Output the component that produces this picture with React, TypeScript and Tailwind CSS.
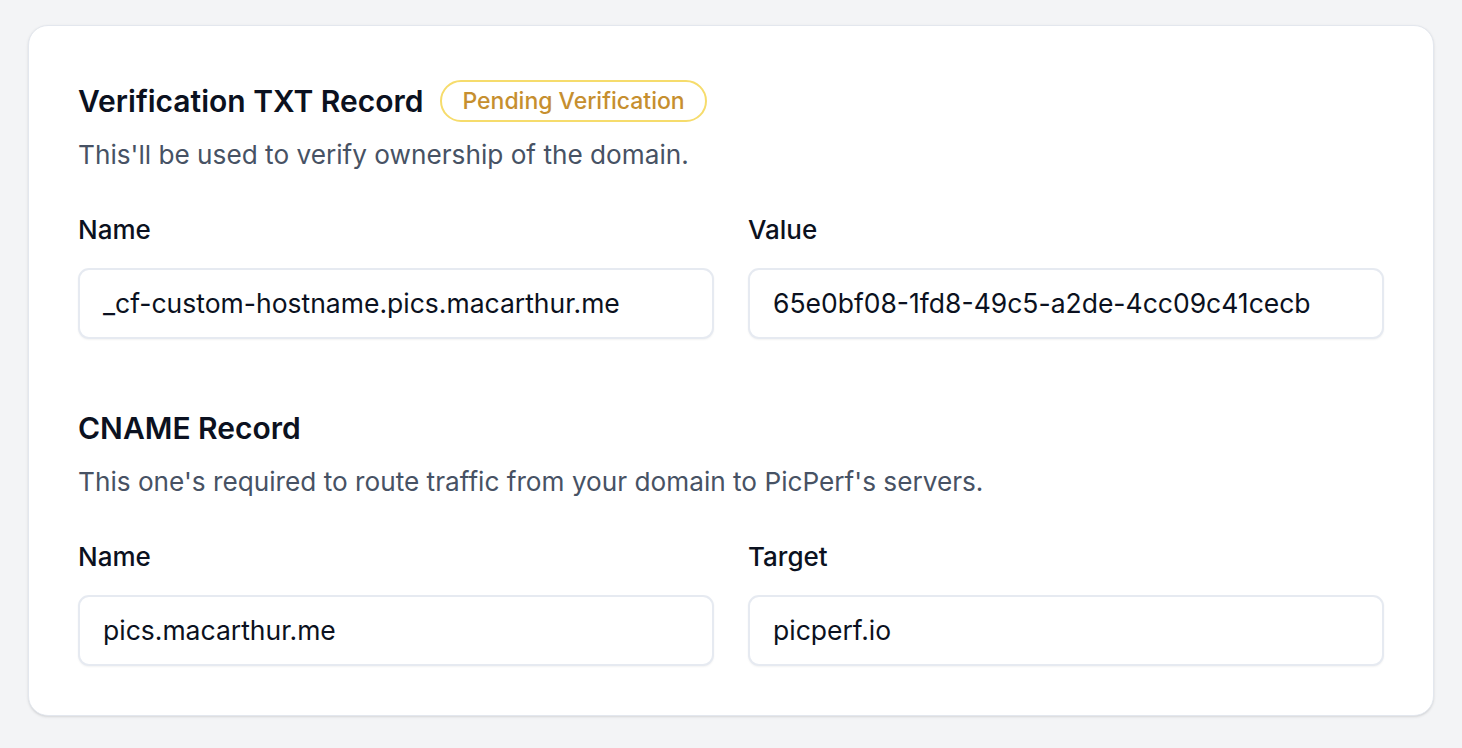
import React from 'react';

type Field = { label: string; value: string };

function RecordSection({
  title,
  copy,
  badge,
  fields,
}: {
  title: string;
  copy: string;
  badge?: string;
  fields: Field[];
}) {
  return (
    <section>
      <div className="flex h-[42px] items-center gap-[17px]">
        <h2 className="text-[30px] font-semibold leading-none text-[#0b1120]">{title}</h2>
        {badge ? (
          <span className="flex h-[42px] items-center rounded-full border-2 border-[#f6dc6c] px-[20px] text-[23px] font-medium text-[#c68f2f]">
            {badge}
          </span>
        ) : null}
      </div>
      <p className="mt-[17px] text-[26.2px] leading-[32px] text-[#475264]">{copy}</p>
      <div className="mt-[43px] grid grid-cols-2 gap-x-[34px]">
        {fields.map((field, i) => (
          <div key={i}>
            <label className="block text-[26px] font-medium leading-[32px] text-[#0b1120]">
              {field.label}
            </label>
            <div className="mt-[22px] flex h-[71px] items-center rounded-[11px] border-2 border-[#e6eaf1] bg-white px-[23px] text-[26.5px] text-[#0b1120] shadow-xs">
              {field.value}
            </div>
          </div>
        ))}
      </div>
    </section>
  );
}

export default function App() {
  return (
    <div
      className="min-h-screen bg-[#f3f4f6] px-[28px] pt-[25px] pb-[32px]"
      style={{ fontFamily: 'Inter, "Noto Sans", sans-serif' }}
    >
      <div className="rounded-[20px] border border-[#e3e7ee] bg-white px-[49px] pt-[54px] pb-[49px] shadow-sm">
        <RecordSection
          title="Verification TXT Record"
          badge="Pending Verification"
          copy="This'll be used to verify ownership of the domain."
          fields={[
            { label: 'Name', value: '_cf-custom-hostname.pics.macarthur.me' },
            { label: 'Value', value: '65e0bf08-1fd8-49c5-a2de-4cc09c41cecb' },
          ]}
        />
        <div className="mt-[68px]">
          <RecordSection
            title="CNAME Record"
            copy="This one's required to route traffic from your domain to PicPerf's servers."
            fields={[
              { label: 'Name', value: 'pics.macarthur.me' },
              { label: 'Target', value: 'picperf.io' },
            ]}
          />
        </div>
      </div>
    </div>
  );
}
